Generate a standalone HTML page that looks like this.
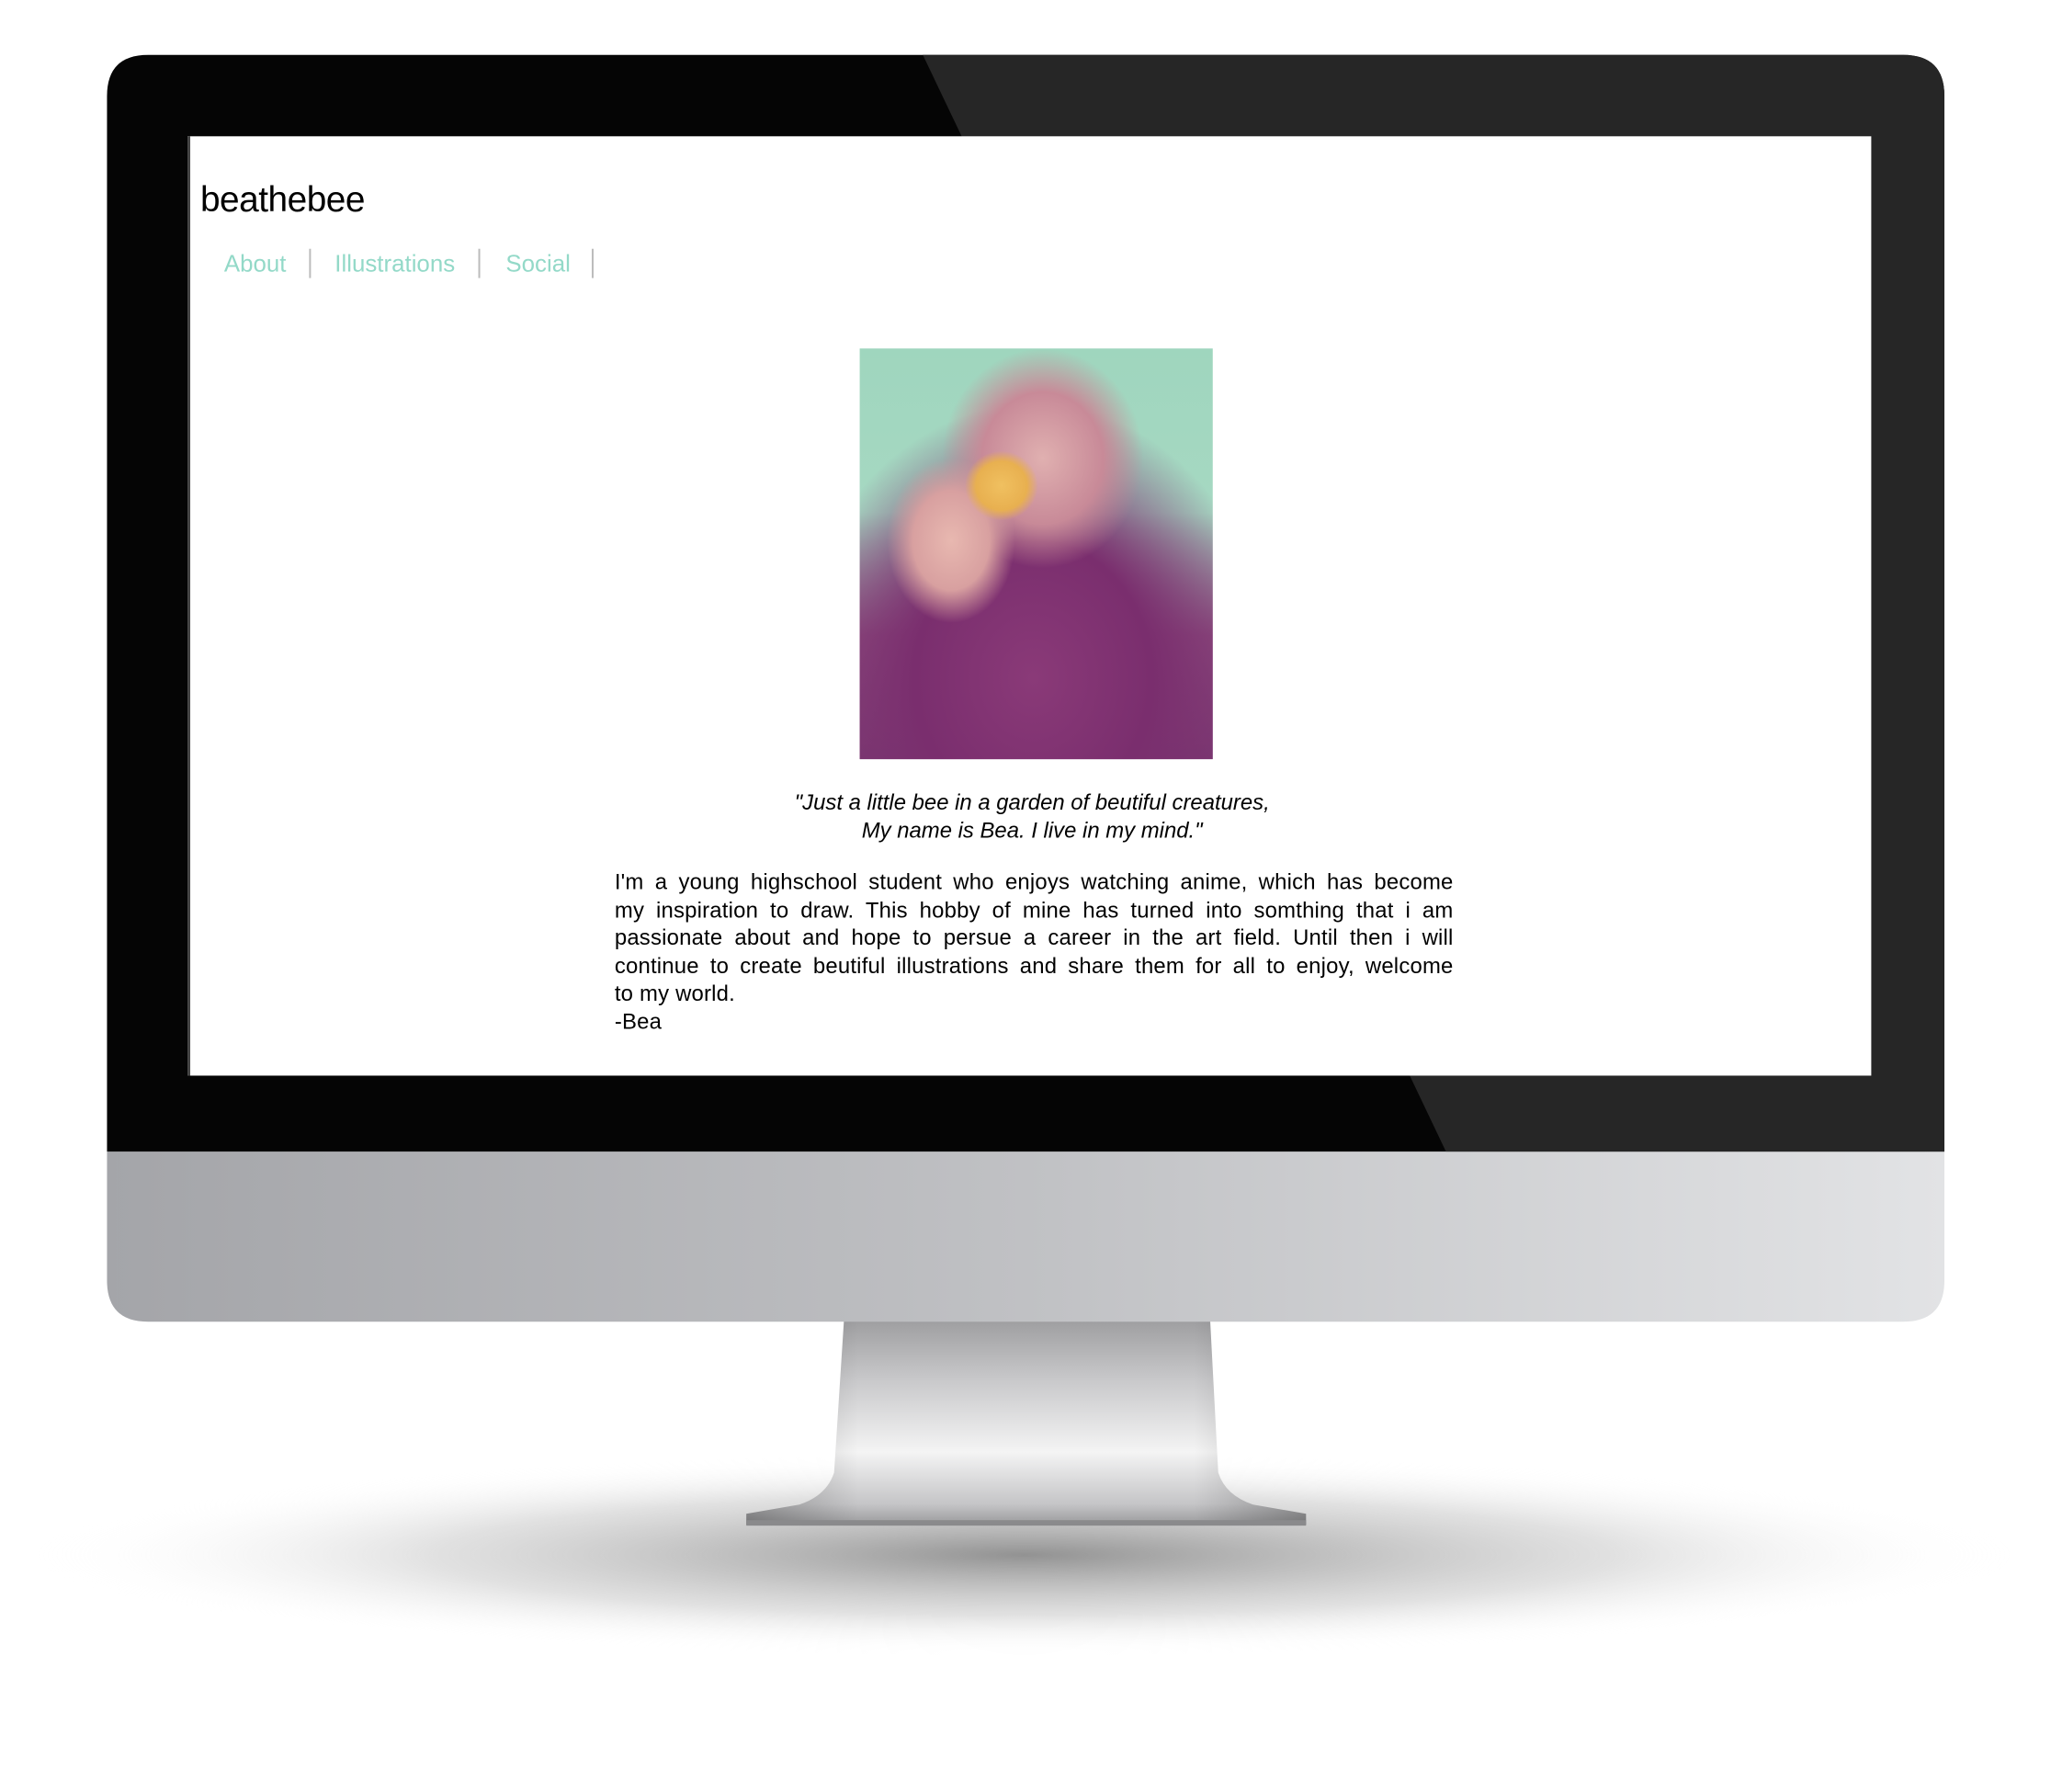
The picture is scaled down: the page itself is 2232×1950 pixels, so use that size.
<!DOCTYPE html>
<html><head><meta charset="utf-8"><style>
html,body{margin:0;padding:0;width:2232px;height:1950px;background:#fff;overflow:hidden;font-family:"Liberation Sans",sans-serif;}
#w{position:absolute;left:0;top:0;width:2232px;height:1950px;transform:scale(0.9953);transform-origin:0 0;}
.abs{position:absolute;}
.screen{position:absolute;left:205px;top:149px;width:1841px;height:1027px;background:#fff;border-left:3px solid #444;box-sizing:border-box;}
.title{position:absolute;left:11px;top:48px;font-size:39px;color:#000;letter-spacing:-0.5px;}
.nav{position:absolute;top:124px;font-size:26px;color:#93d9c8;}
.sep{position:absolute;top:123px;width:2px;height:32px;background:#bbb;}
.photo{position:absolute;left:732px;top:232px;width:386px;height:449px;
background:
radial-gradient(ellipse 40px 38px at 155px 150px,#f0c060 0%,#e8b050 70%,rgba(232,176,80,0) 100%),
radial-gradient(ellipse 70px 90px at 100px 210px,#e8b8b0 0%,#d8a0a0 60%,rgba(216,160,160,0) 100%),
radial-gradient(ellipse 110px 120px at 200px 120px,#e0b0b0 0%,#c88a98 60%,rgba(200,138,152,0) 100%),
radial-gradient(ellipse 260px 300px at 190px 360px,#8a3a78 0%,#7a2e6e 50%,rgba(122,46,110,0) 100%),
linear-gradient(180deg,#9fd6be 0%,#a6d8c2 40%,#8e5080 70%,#7a3a72 100%);}
.q{position:absolute;left:0;width:1841px;text-align:center;font-style:italic;font-size:24px;color:#000;}
.p{position:absolute;left:464px;width:917px;font-size:24px;color:#000;line-height:30.6px;letter-spacing:0.2px;}
.p div{text-align:justify;text-align-last:justify;white-space:nowrap;}
.p div.l{text-align-last:left;}
</style></head><body><div id="w">
<svg class="abs" style="left:0;top:0" width="2232" height="1950">
<defs>
<linearGradient id="chin" x1="0" x2="1"><stop offset="0" stop-color="#a4a5a9"/><stop offset="0.5" stop-color="#c0c1c4"/><stop offset="1" stop-color="#e2e3e5"/></linearGradient>
<linearGradient id="stand" x1="0" y1="0" x2="0" y2="1"><stop offset="0" stop-color="#9c9c9e"/><stop offset="0.3" stop-color="#c8c8ca"/><stop offset="0.65" stop-color="#f4f4f4"/><stop offset="0.9" stop-color="#c5c5c7"/><stop offset="1" stop-color="#9a9a9c"/></linearGradient>
<linearGradient id="standH" x1="0" x2="1"><stop offset="0" stop-color="#000" stop-opacity="0.25"/><stop offset="0.2" stop-color="#000" stop-opacity="0"/><stop offset="0.8" stop-color="#000" stop-opacity="0"/><stop offset="1" stop-color="#000" stop-opacity="0.25"/></linearGradient>
<radialGradient id="sh" cx="0.5" cy="0.5" r="0.5"><stop offset="0" stop-color="#777" stop-opacity="0.8"/><stop offset="0.6" stop-color="#aaa" stop-opacity="0.35"/><stop offset="1" stop-color="#fff" stop-opacity="0"/></radialGradient>
</defs>
<ellipse cx="1120" cy="1700" rx="1080" ry="110" fill="url(#sh)"/>
<path d="M923 1440 L1323 1440 L1332 1610 Q1340 1635 1370 1645 L1428 1655 L1428 1667 L816 1667 L816 1655 L874 1645 Q904 1635 912 1610 Z" fill="url(#stand)"/>
<path d="M923 1440 L1323 1440 L1332 1610 Q1340 1635 1370 1645 L1428 1655 L1428 1667 L816 1667 L816 1655 L874 1645 Q904 1635 912 1610 Z" fill="url(#standH)"/>
<rect x="816" y="1662" width="612" height="6" fill="#8a8a8c"/>
<path d="M117 1259 L2126 1259 L2126 1400 Q2126 1445 2081 1445 L162 1445 Q117 1445 117 1400 Z" fill="url(#chin)"/>
<path d="M162 60 L2081 60 Q2126 60 2126 105 L2126 1259 L117 1259 L117 105 Q117 60 162 60 Z" fill="#050505"/>
<path d="M1009 60 L2081 60 Q2126 60 2126 105 L2126 1259 L1581 1259 Z" fill="#262626"/>
</svg>
<div class="screen">
<div class="title">beathebee</div>
<div class="nav" style="left:37px">About</div>
<div class="sep" style="left:130px"></div>
<div class="nav" style="left:158px">Illustrations</div>
<div class="sep" style="left:315px"></div>
<div class="nav" style="left:345px">Social</div>
<div class="sep" style="left:439px"></div>
<div class="photo"></div>
<div class="q" style="top:715px">"Just a little bee in a garden of beutiful creatures,</div>
<div class="q" style="top:746px">My name is Bea. I live in my mind."</div>
<div class="p" style="top:801px">
<div>I'm a young highschool student who enjoys watching anime, which has become</div>
<div>my inspiration to draw. This hobby of mine has turned into somthing that i am</div>
<div>passionate about and hope to persue a career in the art field. Until then i will</div>
<div>continue to create beutiful illustrations and share them for all to enjoy, welcome</div>
<div class="l">to my world.</div>
<div class="l">-Bea</div>
</div>
</div>
</div></body></html>
